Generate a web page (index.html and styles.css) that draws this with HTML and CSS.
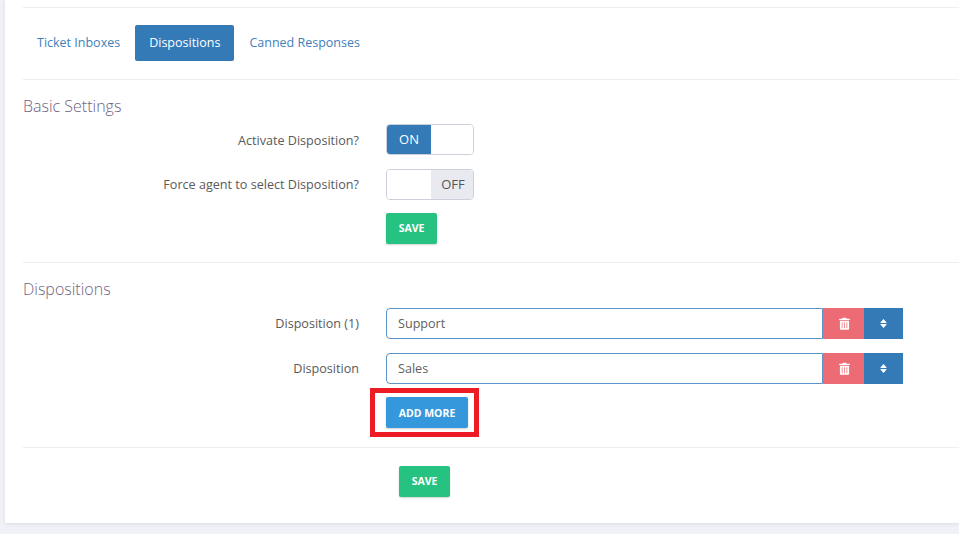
FILE: index.html
```html
<!DOCTYPE html>
<html lang="en">
<head>
<meta charset="utf-8">
<title>Dispositions</title>
<link rel="stylesheet" href="styles.css">
</head>
<body>
<main class="card">
  <nav class="tabs">
    <a class="tab">Ticket Inboxes</a>
    <a class="tab active">Dispositions</a>
    <a class="tab">Canned Responses</a>
  </nav>

  <section class="section basic">
    <h2 class="heading">Basic Settings</h2>
    <div class="row row-toggle first">
      <label class="label">Activate Disposition?</label>
      <div class="toggle"><span class="on">ON</span><span class="knob"></span></div>
    </div>
    <div class="row row-toggle">
      <label class="label">Force agent to select Disposition?</label>
      <div class="toggle"><span class="knob knob-left"></span><span class="off">OFF</span></div>
    </div>
    <div class="row row-save">
      <span class="label"></span>
      <button class="btn green">SAVE</button>
    </div>
  </section>

  <section class="section dispositions">
    <h2 class="heading">Dispositions</h2>
    <div class="row row-input first">
      <label class="label">Disposition (1)</label>
      <div class="group">
        <div class="input">Support</div>
        <button class="icon red" aria-label="Delete">
          <svg width="11" height="13" viewBox="0 0 12 14"><path fill="#fff" d="M4.200 .6h3.600l.7 1.200H11.300c.3 0 .6.300.6.600v.8H.1v-.8c0-.3.3-.6.6-.6H3.500z"/><path fill="#fff" fill-rule="evenodd" d="M1 4h10v8.600c0 .8-.6 1.300-1.300 1.300H2.300C1.600 13.900 1 13.400 1 12.600zM3 5.500v6.800h.8V5.500zM5.600 5.500v6.800h.8V5.500zM8.200 5.500v6.800H9V5.500z"/></svg>
        </button>
        <button class="icon blue" aria-label="Sort">
          <svg width="7" height="11" viewBox="0 0 8 12"><path fill="#fff" d="M4 .8 7.500 4.800c.2.300 0 .7-.4.700H.9c-.4 0-.6-.4-.4-.7zM4 11.200.5 7.200c-.2-.3 0-.7.4-.7h6.200c.4 0 .6.400.4.700z"/></svg>
        </button>
      </div>
    </div>
    <div class="row row-input">
      <label class="label">Disposition</label>
      <div class="group">
        <div class="input">Sales</div>
        <button class="icon red" aria-label="Delete">
          <svg width="11" height="13" viewBox="0 0 12 14"><path fill="#fff" d="M4.200 .6h3.600l.7 1.200H11.300c.3 0 .6.300.6.600v.8H.1v-.8c0-.3.3-.6.6-.6H3.500z"/><path fill="#fff" fill-rule="evenodd" d="M1 4h10v8.600c0 .8-.6 1.300-1.300 1.300H2.300C1.600 13.900 1 13.400 1 12.600zM3 5.500v6.800h.8V5.500zM5.600 5.500v6.800h.8V5.500zM8.200 5.500v6.800H9V5.500z"/></svg>
        </button>
        <button class="icon blue" aria-label="Sort">
          <svg width="7" height="11" viewBox="0 0 8 12"><path fill="#fff" d="M4 .8 7.500 4.800c.2.300 0 .7-.4.700H.9c-.4 0-.6-.4-.4-.7zM4 11.200.5 7.200c-.2-.3 0-.7.4-.7h6.200c.4 0 .6.400.4.700z"/></svg>
        </button>
      </div>
    </div>
    <div class="row row-add">
      <span class="label"></span>
      <div class="highlight-anchor">
        <button class="btn sky">ADD MORE</button>
        <span class="highlight"></span>
      </div>
    </div>
  </section>

  <footer class="footer">
    <button class="btn green">SAVE</button>
  </footer>
</main>
</body>
</html>
```

FILE: styles.css
```css
* { box-sizing: border-box; }
html, body { margin: 0; height: 534px; overflow: hidden; }
body {
  background: #f1f2f7;
  font-family: "Open Sans", sans-serif;
  font-size: 12.600px;
  color: #555;
  padding-left: 5px;
}
.card {
  background: #fff;
  height: 523px;
  padding: 7px 0 0 18px;
  box-shadow: 0 1px 4px rgba(40, 50, 80, .10);
}
.tabs {
  display: flex;
  height: 73px;
  padding: 17px 0 18px;
  border-top: 1px solid #eeeeee;
  border-bottom: 1px solid #eeeeee;
  font-size: 12.500px;
}
.tab {
  height: 36px;
  line-height: 35px;
  padding: 0 14px;
  color: #3f80ba;
  border-radius: 2px;
}
.tab.active {
  background: #337ab7;
  color: #fff;
  margin: 0 1px;
}
.section { border-bottom: 1px solid #eeeeee; }
.basic { height: 183px; }
.dispositions { height: 185px; }
.heading {
  margin: 0;
  padding-top: 15px;
  font-size: 16px;
  font-weight: 300;
  line-height: 22px;
  color: #6f6283;
}
.row { display: flex; align-items: center; }
.label {
  flex: 0 0 336px;
  margin-right: 27px;
  text-align: right;
  color: #5a5a5a;
}
.basic .first .label { padding-top: 1px; }
.row-toggle { height: 31px; margin-bottom: 14px; }
.basic .first { margin-top: 7px; }
.toggle {
  display: flex;
  width: 88px;
  height: 31px;
  border: 1px solid #ccd0dc;
  border-radius: 4px;
  overflow: hidden;
  font-size: 13px;
}
.toggle span { text-align: center; line-height: 29px; }
.on { flex: 0 0 44px; background: #337ab7; color: #fff; }
.off { flex: 1; background: #e9eaf0; color: #555; padding-left: 2px; }
.knob { flex: 1; background: #fff; }
.knob-left { flex: 0 0 44px; }
.btn {
  border: 0;
  border-radius: 2px;
  color: #fff;
  font: 700 10.500px/1 "Open Sans", sans-serif;
  box-shadow: 0 1px 2px rgba(0, 0, 0, .18);
  padding: 0;
}
.green { background: #26c281; width: 51px; height: 31px; }
.sky { background: #3598dc; width: 82px; height: 31px; display: block; padding-top: 1px; }
.row-save { margin-top: -1px; }
.row-input { height: 31px; margin-bottom: 14px; }
.row-input .label { padding-bottom: 1px; }
.dispositions .first { margin-top: 8px; }
.group { display: flex; width: 517px; height: 31px; }
.input {
  flex: 1;
  border: 1px solid #5a94c8;
  border-radius: 4px 0 0 4px;
  padding: 0 11px;
  line-height: 29px;
  color: #5f5f5f;
}
.icon {
  border: 0;
  padding: 0;
  display: flex;
  align-items: center;
  justify-content: center;
}
.red { background: #ed6b75; width: 41px; padding-left: 1px; }
.blue { background: #337ab7; width: 39px; }
.row-add { margin-top: -1px; }
.highlight-anchor { position: relative; }
.highlight {
  position: absolute;
  left: -16px;
  top: -9px;
  width: 109px;
  height: 49px;
  border: 5px solid #ed1c24;
}
.footer { padding: 18px 0 0 376px; }
```
